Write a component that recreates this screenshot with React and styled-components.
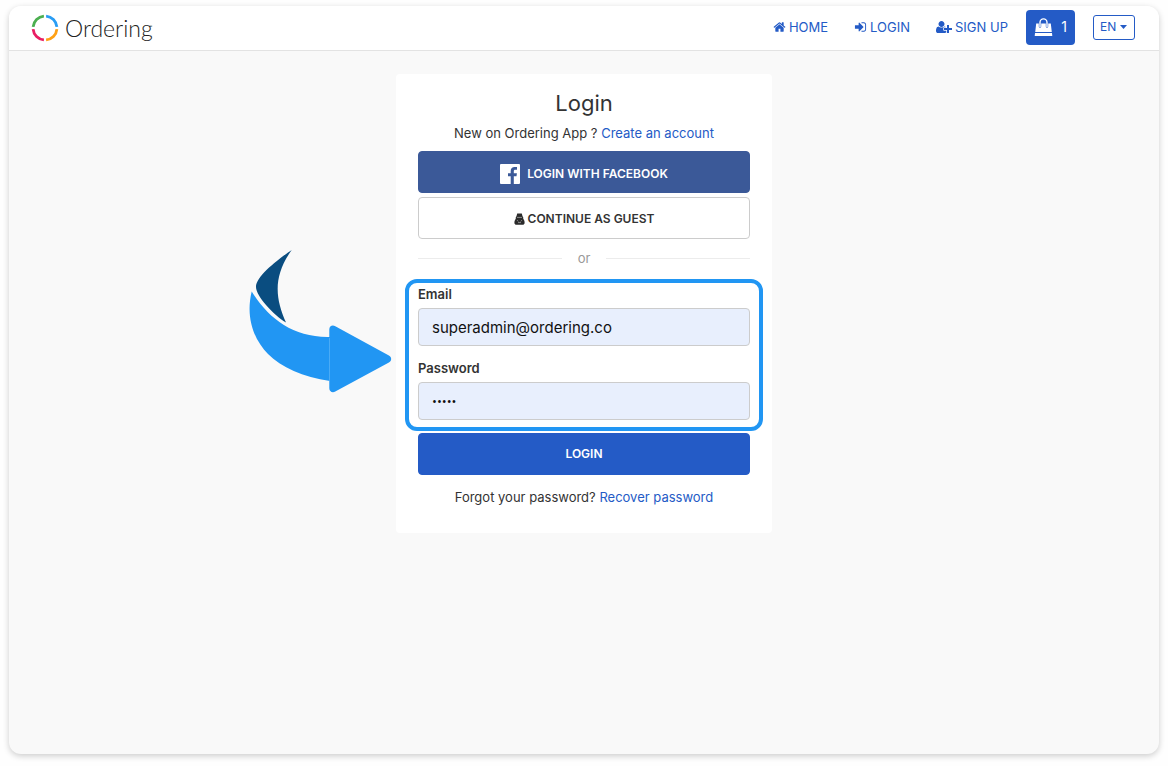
import React, { useState } from "react";
import styled, { createGlobalStyle } from "styled-components";

const GlobalStyle = createGlobalStyle`
  * { box-sizing: border-box; }
  body {
    margin: 0;
    background: #fefefe;
    color: #333;
    font: 13px/20px Inter, "Open Sans", sans-serif;
  }
  button, input, select { font: inherit; color: inherit; margin: 0; }
  svg { display: block; flex: none; }
`;

const Page = styled.div`
  min-height: 100vh;
  padding: 6px 9px 12px;
  display: flex;
`;

const Frame = styled.div`
  flex: 1;
  min-width: 0;
  border-radius: 12px;
  background: #f9f9f9;
  box-shadow: 0 2px 6px rgba(0, 0, 0, 0.2);
  overflow: hidden;
`;

const Header = styled.header`
  display: flex;
  align-items: center;
  justify-content: space-between;
  height: 45px;
  padding: 0 24px 0 22px;
  background: #fff;
  border-bottom: 1px solid #e3e3e3;
`;

const Brand = styled.a`
  display: flex;
  align-items: center;
  gap: 6px;
  color: #222;
  text-decoration: none;
  font: 300 23px/30px Lato, sans-serif;
`;

const Nav = styled.nav`
  display: flex;
  align-items: center;
  gap: 18px;
  padding-bottom: 2px;
`;

const NavLinks = styled.div`
  display: flex;
  gap: 26px;
`;

const NavLink = styled.a`
  display: flex;
  align-items: center;
  gap: 3px;
  color: #245bc6;
  text-decoration: none;
`;

const CartButton = styled.button`
  display: flex;
  align-items: center;
  justify-content: center;
  gap: 8px;
  width: 49px;
  height: 35px;
  padding: 0;
  border: 0;
  border-radius: 4px;
  background: #245bc6;
  color: #fff;
  font-size: 14px;
`;

const Language = styled.label`
  display: grid;
  align-items: center;
  height: 25px;
  width: 42px;
  border: 1px solid #245bc6;
  border-radius: 3px;
  color: #245bc6;

  select, svg { grid-area: 1 / 1; }
  svg { justify-self: end; margin-right: 7px; pointer-events: none; }
`;

const LanguageSelect = styled.select`
  appearance: none;
  width: 100%;
  height: 100%;
  padding: 0 6px;
  border: 0;
  background: transparent;
  font-size: 12px;
`;

const Main = styled.main`
  display: flex;
  justify-content: center;
  padding: 23px 16px;
`;

const Card = styled.section`
  position: relative;
  width: 100%;
  max-width: 376px;
  padding: 13px 22px 26px;
  border-radius: 4px;
  background: #fff;
`;

const Title = styled.h1`
  margin: 0 0 4px;
  font-size: 22px;
  line-height: 32px;
  font-weight: 400;
  text-align: center;
`;

const Note = styled.p`
  margin: 0;
  text-align: center;
`;

const TextLink = styled.a`
  color: #245bc6;
  text-decoration: none;
`;

const Choices = styled.div`
  display: grid;
  gap: 4px;
  margin: 8px 0 9px;
`;

const tones = {
  facebook: "background: #3b5998; border-color: #3b5998; color: #fff; gap: 7px; padding-top: 4px;",
  guest: "background: #fff; border-color: #ccc; color: #333; gap: 3px; padding-top: 2px;",
  primary: "background: #245bc6; border-color: #245bc6; color: #fff;",
};

const Button = styled.button`
  display: flex;
  align-items: center;
  justify-content: center;
  width: 100%;
  height: 42px;
  border: 1px solid;
  border-radius: 4px;
  font-size: 12px;
  font-weight: 600;
  ${(p) => tones[p.$tone]}
`;

const Divider = styled.div`
  display: flex;
  align-items: center;
  gap: 16px;
  margin-bottom: 16px;
  color: #999;

  &::before, &::after {
    content: "";
    flex: 1;
    height: 1px;
    background: #ececec;
  }
`;

const Fields = styled.div`
  position: relative;
  display: grid;
  gap: 12px;
  margin-bottom: 13px;
`;

const Field = styled.div`
  display: grid;
  gap: 4px;

  label { font-weight: 600; }
`;

const Input = styled.input`
  width: 100%;
  height: 38px;
  padding: 0 13px;
  border: 1px solid #ccc;
  border-radius: 4px;
  background: #e8effd;
  color: #111;
  font-size: 15px;

  &[type="password"] { font: 13px "Open Sans", sans-serif; }
`;

const Highlight = styled.div`
  position: absolute;
  inset: -5px -13px -11px;
  border: 4px solid #2196f3;
  border-radius: 12px;
  pointer-events: none;
`;

const Arrow = styled.svg`
  position: absolute;
  top: 176px;
  right: calc(100% + 4px);
`;

const Recover = styled(Note)`
  margin-top: 12px;
`;

const icons = {
  home: [1792, "M1472 992v480q0 26-19 45t-45 19h-384v-384h-256v384h-384q-26 0-45-19t-19-45v-480q0-1 .5-3t.5-3l575-474 575 474q1 2 1 6zm223-69l-62 74q-8 9-21 11h-3q-13 0-21-7l-692-577-692 577q-12 8-24 7-13-2-21-11l-62-74q-8-10-7-23.5t11-21.5l719-599q32-26 76-26t76 26l244 204v-195q0-14 9-23t23-9h192q14 0 23 9t9 23v408l219 182q10 8 11 21.5t-7 23.5z"],
  login: [1792, "M1312 896q0 26-19 45l-544 544q-19 19-45 19t-45-19-19-45v-288h-448q-26 0-45-19t-19-45v-384q0-26 19-45t45-19h448v-288q0-26 19-45t45-19 45 19l544 544q19 19 19 45zm352-352v704q0 119-84.5 203.5t-203.5 84.5h-320q-13 0-22.5-9.5t-9.5-22.5q0-4-1-20t-.5-26.5 3-23.5 10-19.5 20.5-6.5h320q66 0 113-47t47-113v-704q0-66-47-113t-113-47h-312l-11.5-1-11.5-3-8-5.5-7-9-2-13.5q0-4-1-20t-.5-26.5 3-23.5 10-19.5 20.5-6.5h320q119 0 203.5 84.5t84.5 203.5z"],
  signup: [2048, "M704 896q-159 0-271.5-112.5t-112.5-271.5 112.5-271.5 271.5-112.5 271.5 112.5 112.5 271.5-112.5 271.5-271.5 112.5zm960 128h352q13 0 22.5 9.5t9.5 22.5v192q0 13-9.5 22.5t-22.5 9.5h-352v352q0 13-9.5 22.5t-22.5 9.5h-192q-13 0-22.5-9.5t-9.5-22.5v-352h-352q-13 0-22.5-9.5t-9.5-22.5v-192q0-13 9.5-22.5t22.5-9.5h352v-352q0-13 9.5-22.5t22.5-9.5h192q13 0 22.5 9.5t9.5 22.5v352zm-736 224q0 52 38 90t90 38h256v238q-68 50-171 50h-874q-121 0-194-69t-73-190q0-53 3.5-103.5t14-109 26.5-108.5 43-97.5 62-81 85.5-53.5 111.5-20q19 0 39 17 79 61 154.5 91.5t164.5 30.5 164.5-30.5 154.5-91.5q20-17 39-17 132 0 217 96h-223q-52 0-90 38t-38 90v192z"],
};

const NavIcon = ({ name }) => (
  <svg height="14" width={name === "signup" ? 16 : 13} viewBox={`0 0 ${icons[name][0]} 1792`} fill="currentColor" aria-hidden="true">
    <path d={icons[name][1]} />
  </svg>
);

const LogoMark = () => (
  <svg width="28" height="28" viewBox="0 0 28 28" fill="none" strokeWidth="2.8" aria-hidden="true">
    <path d="M15.1 2.1A12 12 0 0 1 25.9 12.9" stroke="#2a9df4" />
    <path d="M25.9 15.1A12 12 0 0 1 15.1 25.9" stroke="#ffa115" />
    <path d="M12.9 25.9A12 12 0 0 1 2.1 15.1" stroke="#e91e63" />
    <path d="M2.1 12.9A12 12 0 0 1 12.9 2.1" stroke="#4caf50" />
  </svg>
);

const BagIcon = () => (
  <svg width="19" height="19" viewBox="0 0 19 19" aria-hidden="true">
    <path d="M6 9V4.400a3.500 3.500 0 0 1 7 0V9" fill="none" stroke="#fff" strokeWidth="1.400" />
    <path d="M2.200 5.400h2.600v3a1.200 1.200 0 0 0 2.400 0v-3h4.600v3a1.200 1.200 0 0 0 2.400 0v-3h2.600l1 8.700H1.200zM1 14.900h17l.3 3.100H.7z" fill="#fff" />
  </svg>
);

const FacebookIcon = () => (
  <svg width="20" height="20" viewBox="0 0 20 20" aria-hidden="true">
    <path d="M1 0h18a1 1 0 0 1 1 1v18a1 1 0 0 1-1 1h-5.200v-7.800h2.700l.4-3h-3.100V7.300c0-.9.3-1.500 1.500-1.500H17V3.100a20 20 0 0 0-2.400-.1c-2.300 0-3.900 1.400-3.900 4v2.200H8v3h2.700V20H1a1 1 0 0 1-1-1V1a1 1 0 0 1 1-1z" fill="#fff" />
  </svg>
);

const GuestIcon = () => (
  <svg width="11" height="12" viewBox="0 0 11 12" aria-hidden="true">
    <path d="M3.200.4h4.600l.8 3 .6.500v1.700l.5.800c.7.900.9 2 .9 3.200 0 1.400-.5 2.100-1.500 2.100H1.900c-1 0-1.500-.7-1.500-2.100 0-1.200.2-2.300.9-3.200l.5-.8V3.900l.6-.5z" fill="#2b2b2b" />
    <path d="M3 4.400h5M3.200 7.200l1 1.200M7.800 7.200l-1 1.200M4 9.600h3" stroke="#a5a5a5" strokeWidth=".8" fill="none" />
  </svg>
);

const PointerArrow = () => (
  <Arrow width="144" height="143" viewBox="0 0 144 143" aria-hidden="true">
    <path d="M43.700 0C35 6 8 25 8 37c0 9 17.500 28 30 35.500C27 48 25 26 43.700 0z" fill="#0a4d80" />
    <path d="M3.700 41.500C20 68 45 88 82 87v44C55 127 33 117 20 104C7 91-3 69 3.700 41.500z" fill="#2196f3" />
    <path d="M81.300 79.500c0-3.400 3-5 6-3.300l53.600 29.300c3 1.700 3 5.300 0 7l-53.600 29c-3 1.600-6 0-6-3.300z" fill="#2196f3" />
    <path d="M81.500 88v43" stroke="#4aabf6" strokeWidth="1" />
  </Arrow>
);

export default function App() {
  const [email, setEmail] = useState("superadmin@ordering.co");
  const [password, setPassword] = useState("admin");

  return (
    <>
      <GlobalStyle />
      <Page>
        <Frame>
          <Header>
            <Brand href="#"><LogoMark />Ordering</Brand>
            <Nav>
              <NavLinks>
                <NavLink href="#home"><NavIcon name="home" />HOME</NavLink>
                <NavLink href="#login"><NavIcon name="login" />LOGIN</NavLink>
                <NavLink href="#signup"><NavIcon name="signup" />SIGN UP</NavLink>
              </NavLinks>
              <CartButton type="button" aria-label="Cart, 1 item"><BagIcon />1</CartButton>
              <Language>
                <LanguageSelect aria-label="Language" defaultValue="EN">
                  <option>EN</option>
                </LanguageSelect>
                <svg width="7" height="4" viewBox="0 0 7 4" aria-hidden="true"><path d="M0 0h7L3.500 4z" fill="currentColor" /></svg>
              </Language>
            </Nav>
          </Header>
          <Main>
            <Card>
              <PointerArrow />
              <Title>Login</Title>
              <Note>New on Ordering App ? <TextLink href="#signup">Create an account</TextLink></Note>
              <Choices>
                <Button type="button" $tone="facebook"><FacebookIcon />LOGIN WITH FACEBOOK</Button>
                <Button type="button" $tone="guest"><GuestIcon />CONTINUE AS GUEST</Button>
              </Choices>
              <Divider>or</Divider>
              <form onSubmit={(e) => e.preventDefault()}>
                <Fields>
                  <Field>
                    <label htmlFor="email">Email</label>
                    <Input id="email" type="email" value={email} onChange={(e) => setEmail(e.target.value)} />
                  </Field>
                  <Field>
                    <label htmlFor="password">Password</label>
                    <Input id="password" type="password" value={password} onChange={(e) => setPassword(e.target.value)} />
                  </Field>
                  <Highlight />
                </Fields>
                <Button type="submit" $tone="primary">LOGIN</Button>
              </form>
              <Recover>Forgot your password? <TextLink href="#recover">Recover password</TextLink></Recover>
            </Card>
          </Main>
        </Frame>
      </Page>
    </>
  );
}
